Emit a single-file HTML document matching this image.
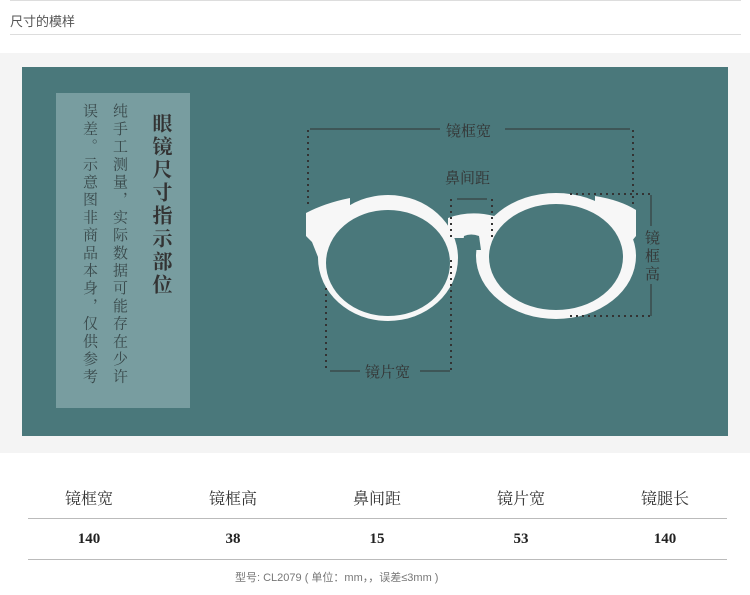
<!DOCTYPE html>
<html><head><meta charset="utf-8"><style>
body{margin:0;width:750px;height:595px;background:#fff;position:relative;overflow:hidden;font-family:"Liberation Sans","Noto Sans CJK SC",sans-serif}
.a{position:absolute}
.serif{font-family:"Liberation Serif","Noto Serif CJK SC",serif}
.v{writing-mode:vertical-rl;}
</style></head><body>
<div class="a" style="left:10px;top:0;width:731px;height:1px;background:#ddd"></div>
<div class="a" style="left:10px;top:11px;font-size:13px;color:#555">尺寸的模样</div>
<div class="a" style="left:10px;top:34px;width:731px;height:1px;background:#ddd"></div>
<div class="a" style="left:0;top:53px;width:750px;height:400px;background:#f4f4f4"></div>
<div class="a" style="left:22px;top:67px;width:706px;height:369px;background:#4a787b"></div>
<div class="a" style="left:56px;top:93px;width:134px;height:315px;background:#789da0"></div>
<div class="a serif v" style="left:148px;top:113px;font-size:20px;font-weight:bold;color:#333;letter-spacing:3px;line-height:24px">眼镜尺寸指示部位</div>
<div class="a serif v" style="left:110px;top:103px;font-size:15px;color:#3a4a4c;line-height:18px;letter-spacing:2.7px">纯手工测量，实际数据可能存在少许</div>
<div class="a serif v" style="left:80px;top:103px;font-size:15px;color:#3a4a4c;line-height:18px;letter-spacing:2.7px">误差。示意图非商品本身，仅供参考</div>
<svg class="a" style="left:0;top:0" width="750" height="595">
<g fill="#f7f7f7">
<ellipse cx="388" cy="258" rx="70" ry="63"/>
<ellipse cx="556" cy="256" rx="80" ry="63"/>
<path d="M448 218 Q470 210 494 216 L494 238 L448 238 Z"/>
<path d="M306 213 Q325 203 350 198 L350 262 L320 262 L312 242 L306 236 Z"/>
<path d="M595 196 Q620 200 636 210 L636 236 L626 248 L620 262 L595 262 Z"/>
</g>
<g fill="#4a787b">
<ellipse cx="388" cy="263" rx="62" ry="53"/>
<ellipse cx="556" cy="257" rx="67" ry="53"/>
<path d="M462 250 L464 236 Q471 233 479 236 L481 250 Z"/>
</g>
<g stroke="#333" stroke-width="2" stroke-dasharray="2 4" fill="none">
<path d="M308 130V208M633 130V208M451 199V240M492 199V237M451 260V370M326 288V370M570 194H652M570 316H652"/>
</g>
<g stroke="#333" stroke-width="1" fill="none">
<path d="M310 129H440M505 129H630M457 199H487M330 371H360M420 371H450M651 195V226M651 284V316"/>
</g>
<g font-family="Liberation Serif,Noto Serif CJK SC,serif" font-size="15" fill="#333">
<text x="446" y="136">镜框宽</text>
<text x="445" y="183">鼻间距</text>
<text x="365" y="377">镜片宽</text>
<text x="645" y="243">镜</text><text x="645" y="261">框</text><text x="645" y="279">高</text>
</g>
</svg>
<div class="a serif" style="left:17px;top:486px;width:720px;display:flex;font-size:16px;color:#333">
<div style="width:144px;text-align:center">镜框宽</div><div style="width:144px;text-align:center">镜框高</div><div style="width:144px;text-align:center">鼻间距</div><div style="width:144px;text-align:center">镜片宽</div><div style="width:144px;text-align:center">镜腿长</div></div>
<div class="a" style="left:28px;top:518px;width:699px;height:1px;background:#bbb"></div>
<div class="a serif" style="left:17px;top:531px;width:720px;display:flex;font-size:15px;font-weight:bold;color:#222">
<div style="width:144px;text-align:center">140</div><div style="width:144px;text-align:center">38</div><div style="width:144px;text-align:center">15</div><div style="width:144px;text-align:center">53</div><div style="width:144px;text-align:center">140</div></div>
<div class="a" style="left:28px;top:559px;width:699px;height:1px;background:#bbb"></div>
<div class="a" style="left:235px;top:569px;font-size:11px;color:#777">型号: CL2079 ( 单位：mm，，误差≤3mm )</div>
</body></html>
